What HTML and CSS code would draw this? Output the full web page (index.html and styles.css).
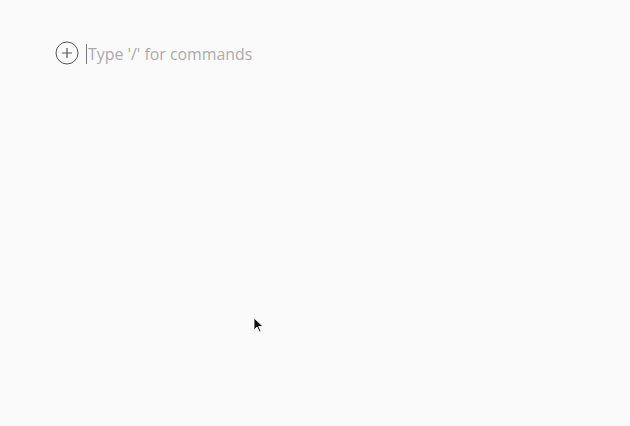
FILE: index.html
```html
<!DOCTYPE html>
<html>
<head>
<meta charset="utf-8">
<link rel="stylesheet" href="styles.css">
</head>
<body>
<div class="editor">
  <div class="line">
    <button class="add" aria-label="Add block">
      <svg width="24" height="24" viewBox="0 0 24 24"><circle cx="12" cy="12" r="11" fill="none" stroke="#555" stroke-width="1"/><path d="M12 7v10M7 12h10" stroke="#555" stroke-width="1.2" fill="none"/></svg>
    </button>
    <div class="input"><span class="caret"></span><span class="placeholder">Type '/' for commands</span></div>
  </div>
</div>
<svg class="pointer" width="12" height="16" viewBox="0 0 12 16"><path d="M1 1v12l3-3 2.5 5 1.6-.8L5.6 9.5H10z" fill="#111" stroke="#fff" stroke-width="0.8"/></svg>
</body>
</html>
```
FILE: styles.css
```css
html, body { margin: 0; padding: 0; background: #fafafa; height: 100%; }
body { font-family: "Open Sans", sans-serif; position: relative; overflow: hidden; }
.editor { padding: 41px 0 0 55px; }
.line { display: flex; align-items: center; gap: 7px; height: 24px; }
.add { width: 24px; height: 24px; padding: 0; border: 0; background: none; display: flex; }
.input { display: flex; align-items: center; padding-top: 2px; }
.caret { width: 1px; height: 20px; background: #777; }
.placeholder { font-size: 15.9px; color: #aaa; line-height: 24px; margin-left: 1px; }
.pointer { position: absolute; left: 253px; top: 317px; }
```
